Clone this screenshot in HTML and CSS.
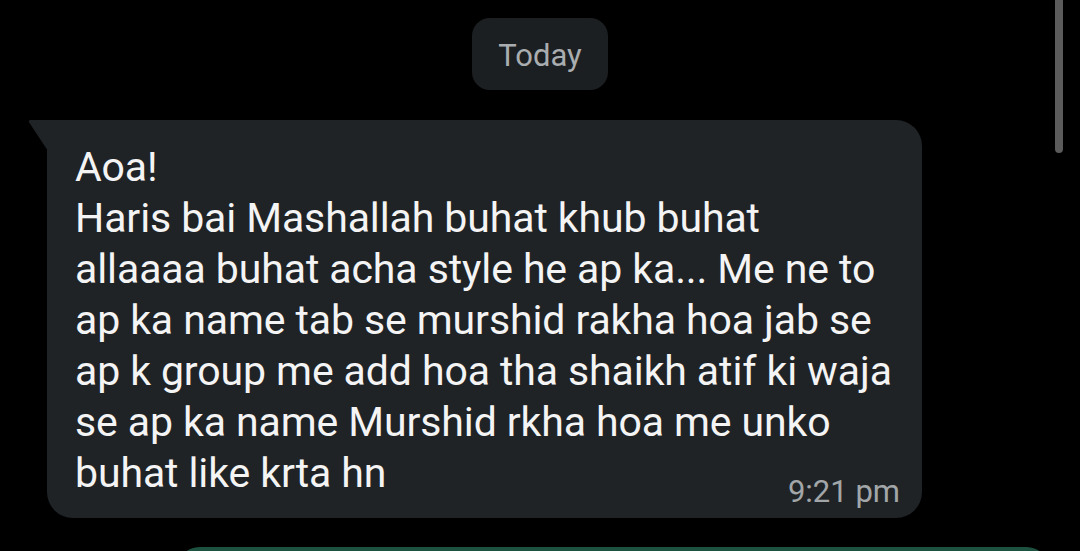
FILE: index.html
```html
<!DOCTYPE html>
<html lang="en">
<head>
<meta charset="utf-8">
<title>Chat</title>
<link rel="stylesheet" href="styles.css">
</head>
<body>
<div class="scrollbar"></div>
<main class="chat">
  <div class="day"><span class="day-pill">Today</span></div>
  <div class="bubble incoming">
    <svg class="tail" width="20" height="32" viewBox="0 0 20 32"><path d="M20 0 H3 Q-0.5 0 1.5 3 L20 31 Z" fill="#1f2326"/></svg>
    <p class="text">Aoa!<br>Haris bai Mashallah buhat khub buhat<br>allaaaa buhat acha style he ap ka... Me ne to<br>ap ka name tab se murshid rakha hoa jab se<br>ap k group me add hoa tha shaikh atif ki waja<br>se ap ka name Murshid rkha hoa me unko</p>
    <div class="last">
      <span class="text">buhat like krta hn</span>
      <span class="time">9:21 pm</span>
    </div>
  </div>
  <div class="bubble outgoing"></div>
</main>
</body>
</html>
```

FILE: styles.css
```css
html, body {
  margin: 0;
  padding: 0;
  background: #000;
  height: 551px;
  overflow: hidden;
}
body {
  font-family: Roboto, "Liberation Sans", sans-serif;
  position: relative;
}
.scrollbar {
  position: absolute;
  left: 1055px;
  top: -10px;
  width: 8px;
  height: 163px;
  border-radius: 4px;
  background: #5b5b5b;
}
.chat {
  display: flex;
  flex-direction: column;
  padding-top: 18px;
}
.day {
  display: flex;
  justify-content: center;
}
.day-pill {
  width: 136px;
  height: 72px;
  box-sizing: border-box;
  padding-top: 3px;
  border-radius: 18px;
  background: #1c1f21;
  color: #a9adb0;
  font-size: 31px;
  display: flex;
  align-items: center;
  justify-content: center;
}
.bubble {
  position: relative;
  background: #1f2326;
}
.incoming {
  margin-top: 30px;
  margin-left: 47px;
  width: 875px;
  box-sizing: border-box;
  height: 398px;
  border-radius: 0 26px 26px 26px;
  padding: 22px 22px 0 28px;
  color: #f4f4f4;
}
.tail {
  position: absolute;
  left: -19px;
  top: 0;
}
.text {
  margin: 0;
  font-size: 41px;
  line-height: 51px;
  letter-spacing: -0.1px;
}
.last {
  display: flex;
  justify-content: space-between;
  align-items: flex-end;
}
.time {
  color: #a2a6a8;
  font-size: 31px;
  line-height: 30px;
  margin-bottom: -8px;
}
.outgoing {
  margin-top: 29px;
  margin-left: 176px;
  width: 874px;
  height: 60px;
  border-radius: 24px;
  background: #1d5240;
}
```
